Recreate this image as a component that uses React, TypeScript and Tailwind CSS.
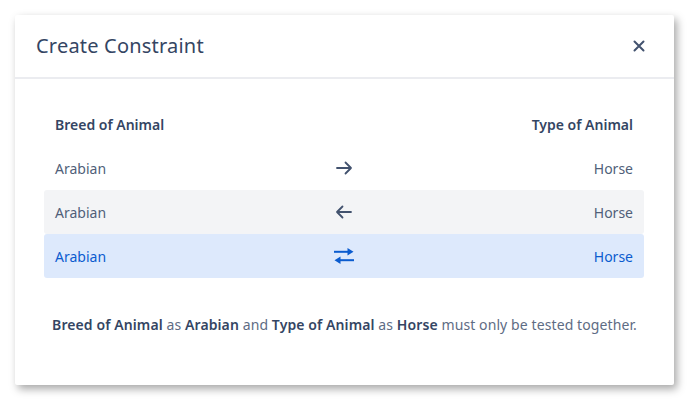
import React from "react";

const ArrowRight = () => (
  <svg width="20" height="20" viewBox="0 0 20 20" fill="none" stroke="currentColor" strokeWidth="1.8" strokeLinecap="round" strokeLinejoin="round">
    <path d="M3 10h14M11.5 4.5 17 10l-5.5 5.5" />
  </svg>
);

const ArrowLeft = () => (
  <svg width="20" height="20" viewBox="0 0 20 20" fill="none" stroke="currentColor" strokeWidth="1.8" strokeLinecap="round" strokeLinejoin="round">
    <path d="M17 10H3M8.5 4.5 3 10l5.5 5.5" />
  </svg>
);

const Swap = () => (
  <svg width="24" height="20" viewBox="0 0 24 20" fill="currentColor">
    <rect x="2" y="4.8" width="15" height="2" />
    <path d="M15.5 2 21.5 5.8 15.5 9.6z" />
    <rect x="7" y="13.2" width="15" height="2" />
    <path d="M8.5 10.4 2.5 14.2 8.5 18z" />
  </svg>
);

const rows = [
  { icon: <ArrowRight />, cls: "text-[#505f79]", iconCls: "text-[#42526e]" },
  { icon: <ArrowLeft />, cls: "bg-[#f3f4f6] text-[#505f79]", iconCls: "text-[#42526e]" },
  { icon: <Swap />, cls: "bg-[#dde9fc] text-[#0b5ccf]", iconCls: "text-[#0b5ccf]" },
];

export default function App() {
  return (
    <div className="w-[699px] h-[410px] bg-white p-[15px] font-['Noto_Sans',sans-serif]">
      <div className="w-[659px] h-[370px] bg-white rounded-[2px] shadow-[3px_4px_8px_rgba(0,0,0,0.35)] flex flex-col">
        <div className="h-[64px] flex items-center justify-between pl-[21px] pr-[29px] border-b-2 border-[#ebecf0]">
          <h1 className="text-[20px] tracking-[0.2px] text-[#344563]">Create Constraint</h1>
          <svg width="12" height="12" viewBox="0 0 12 12" stroke="#42526e" strokeWidth="2" strokeLinecap="round">
            <path d="M1.5 1.5l9 9M10.5 1.5l-9 9" />
          </svg>
        </div>
        <div className="pt-[23px] pl-[29px] pr-[30px] text-[14px]">
          <div className="h-[44px] flex items-center justify-between px-[11px] font-semibold text-[#344563]">
            <span>Breed of Animal</span>
            <span>Type of Animal</span>
          </div>
          {rows.map((r, i) => (
            <div key={i} className={`h-[44px] grid grid-cols-3 items-center px-[11px] rounded-[3px] ${r.cls}`}>
              <span>Arabian</span>
              <span className={`flex justify-center ${r.iconCls}`}>{r.icon}</span>
              <span className="text-right">Horse</span>
            </div>
          ))}
        </div>
        <p className="mt-[36px] text-center text-[14px] tracking-[0.1px] text-[#5e6c84]">
          <b className="font-semibold text-[#344563]">Breed of Animal</b> as{" "}
          <b className="font-semibold text-[#344563]">Arabian</b> and{" "}
          <b className="font-semibold text-[#344563]">Type of Animal</b> as{" "}
          <b className="font-semibold text-[#344563]">Horse</b> must only be tested together.
        </p>
      </div>
    </div>
  );
}
